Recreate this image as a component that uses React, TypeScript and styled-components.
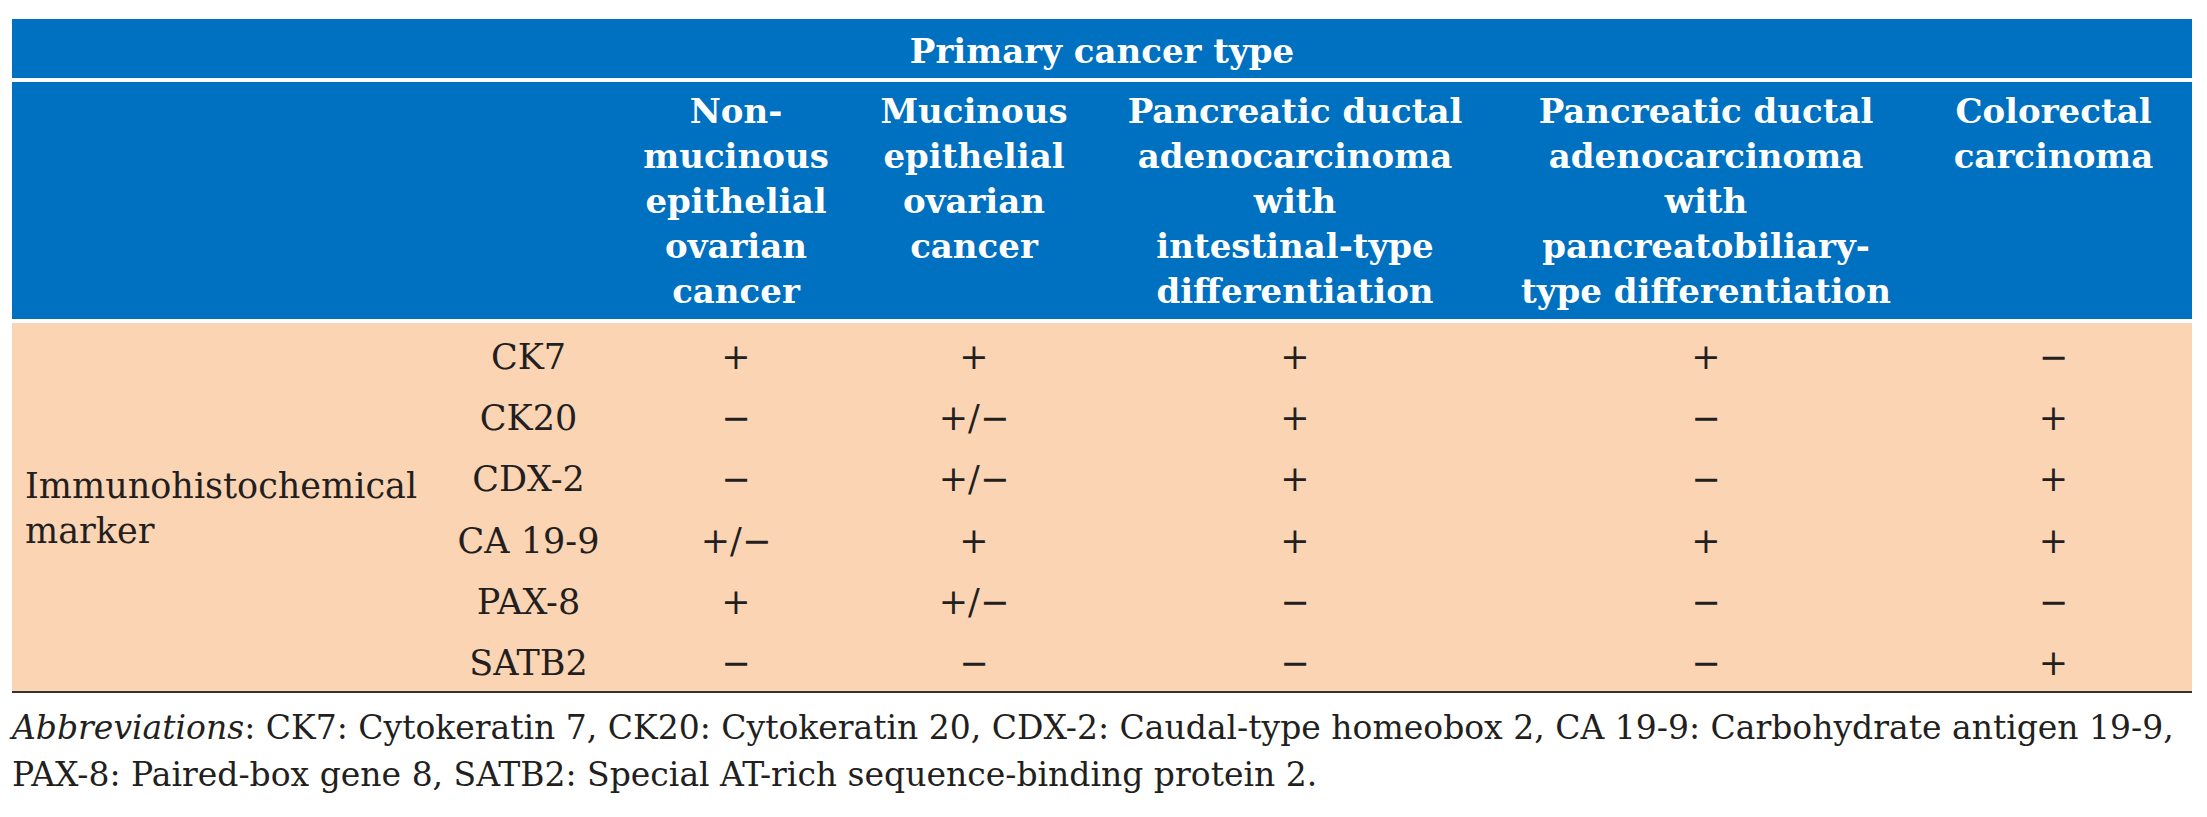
import { Fragment } from 'react'
import styled, { createGlobalStyle } from 'styled-components'

const GlobalStyle = createGlobalStyle`
  html, body {
    margin: 0;
    padding: 0;
    background: #ffffff;
  }
  body {
    font-family: 'DejaVu Serif', Georgia, serif;
    color: #231f20;
  }
`

const COLUMNS = '428px 177px 238px 238px 404px 418px 277px'

const Page = styled.div`
  padding: 19px 12px 0;
`

const Table = styled.div`
  width: 2180px;
`

const TitleBar = styled.div`
  background: #0070c0;
  color: #ffffff;
  font-weight: 700;
  font-size: 34px;
  line-height: 45px;
  text-align: center;
  padding: 10px 0 4px;
`

const HeaderRow = styled.div`
  display: grid;
  grid-template-columns: ${COLUMNS};
  background: #0070c0;
  border-top: 4px solid #ffffff;
  padding: 7px 0 5px;
  height: 225px;
`

const HeaderCell = styled.div<{ $span?: number }>`
  grid-column: span ${p => p.$span ?? 1};
  color: #ffffff;
  font-weight: 700;
  font-size: 34px;
  line-height: 45px;
  text-align: center;
  white-space: nowrap;
`

const Body = styled.div`
  display: grid;
  grid-template-columns: ${COLUMNS};
  grid-template-rows: repeat(6, 1fr);
  height: 368px;
  background: #fbd4b4;
  border-top: 4px solid #ffffff;
  border-bottom: 2px solid #333333;
`

const GroupLabel = styled.div`
  grid-row: 1 / -1;
  grid-column: 1;
  display: flex;
  align-items: center;
  padding: 4px 0 0 13px;
  font-size: 35px;
  line-height: 45px;
`

const Cell = styled.div<{ $col?: number }>`
  grid-column: ${p => (p.$col ? p.$col : 'auto')};
  display: flex;
  align-items: center;
  justify-content: center;
  padding-top: 6px;
  font-size: 35px;
  white-space: nowrap;
`

const Footnote = styled.p`
  margin: 12px 0 0;
  font-size: 33px;
  line-height: 46.5px;
  white-space: nowrap;

  em {
    font-style: italic;
  }
`

const headers: string[][] = [
  ['Non-', 'mucinous', 'epithelial', 'ovarian', 'cancer'],
  ['Mucinous', 'epithelial', 'ovarian', 'cancer'],
  ['Pancreatic ductal', 'adenocarcinoma', 'with', 'intestinal-type', 'differentiation'],
  ['Pancreatic ductal', 'adenocarcinoma', 'with', 'pancreatobiliary-', 'type differentiation'],
  ['Colorectal', 'carcinoma'],
]

const P = '+'
const M = '\u2212'
const PM = '+/\u2212'

const rows: { marker: string; values: string[] }[] = [
  { marker: 'CK7', values: [P, P, P, P, M] },
  { marker: 'CK20', values: [M, PM, P, M, P] },
  { marker: 'CDX-2', values: [M, PM, P, M, P] },
  { marker: 'CA 19-9', values: [PM, P, P, P, P] },
  { marker: 'PAX-8', values: [P, PM, M, M, M] },
  { marker: 'SATB2', values: [M, M, M, M, P] },
]

function App() {
  return (
    <>
      <GlobalStyle />
      <Page>
        <Table>
          <TitleBar>Primary cancer type</TitleBar>
          <HeaderRow>
            <HeaderCell $span={2} />
            {headers.map((lines, i) => (
              <HeaderCell key={i}>
                {lines.map((line, j) => (
                  <div key={j}>{line}</div>
                ))}
              </HeaderCell>
            ))}
          </HeaderRow>
          <Body>
            <GroupLabel>
              Immunohistochemical
              <br />
              marker
            </GroupLabel>
            {rows.map(row => (
              <Fragment key={row.marker}>
                <Cell $col={2}>{row.marker}</Cell>
                {row.values.map((v, i) => (
                  <Cell key={i}>{v}</Cell>
                ))}
              </Fragment>
            ))}
          </Body>
        </Table>
        <Footnote>
          <em>Abbreviations</em>: CK7: Cytokeratin 7, CK20: Cytokeratin 20, CDX-2: Caudal-type homeobox 2, CA 19-9: Carbohydrate antigen 19-9,
          <br />
          PAX-8: Paired-box gene 8, SATB2: Special AT-rich sequence-binding protein 2.
        </Footnote>
      </Page>
    </>
  )
}

export default App
